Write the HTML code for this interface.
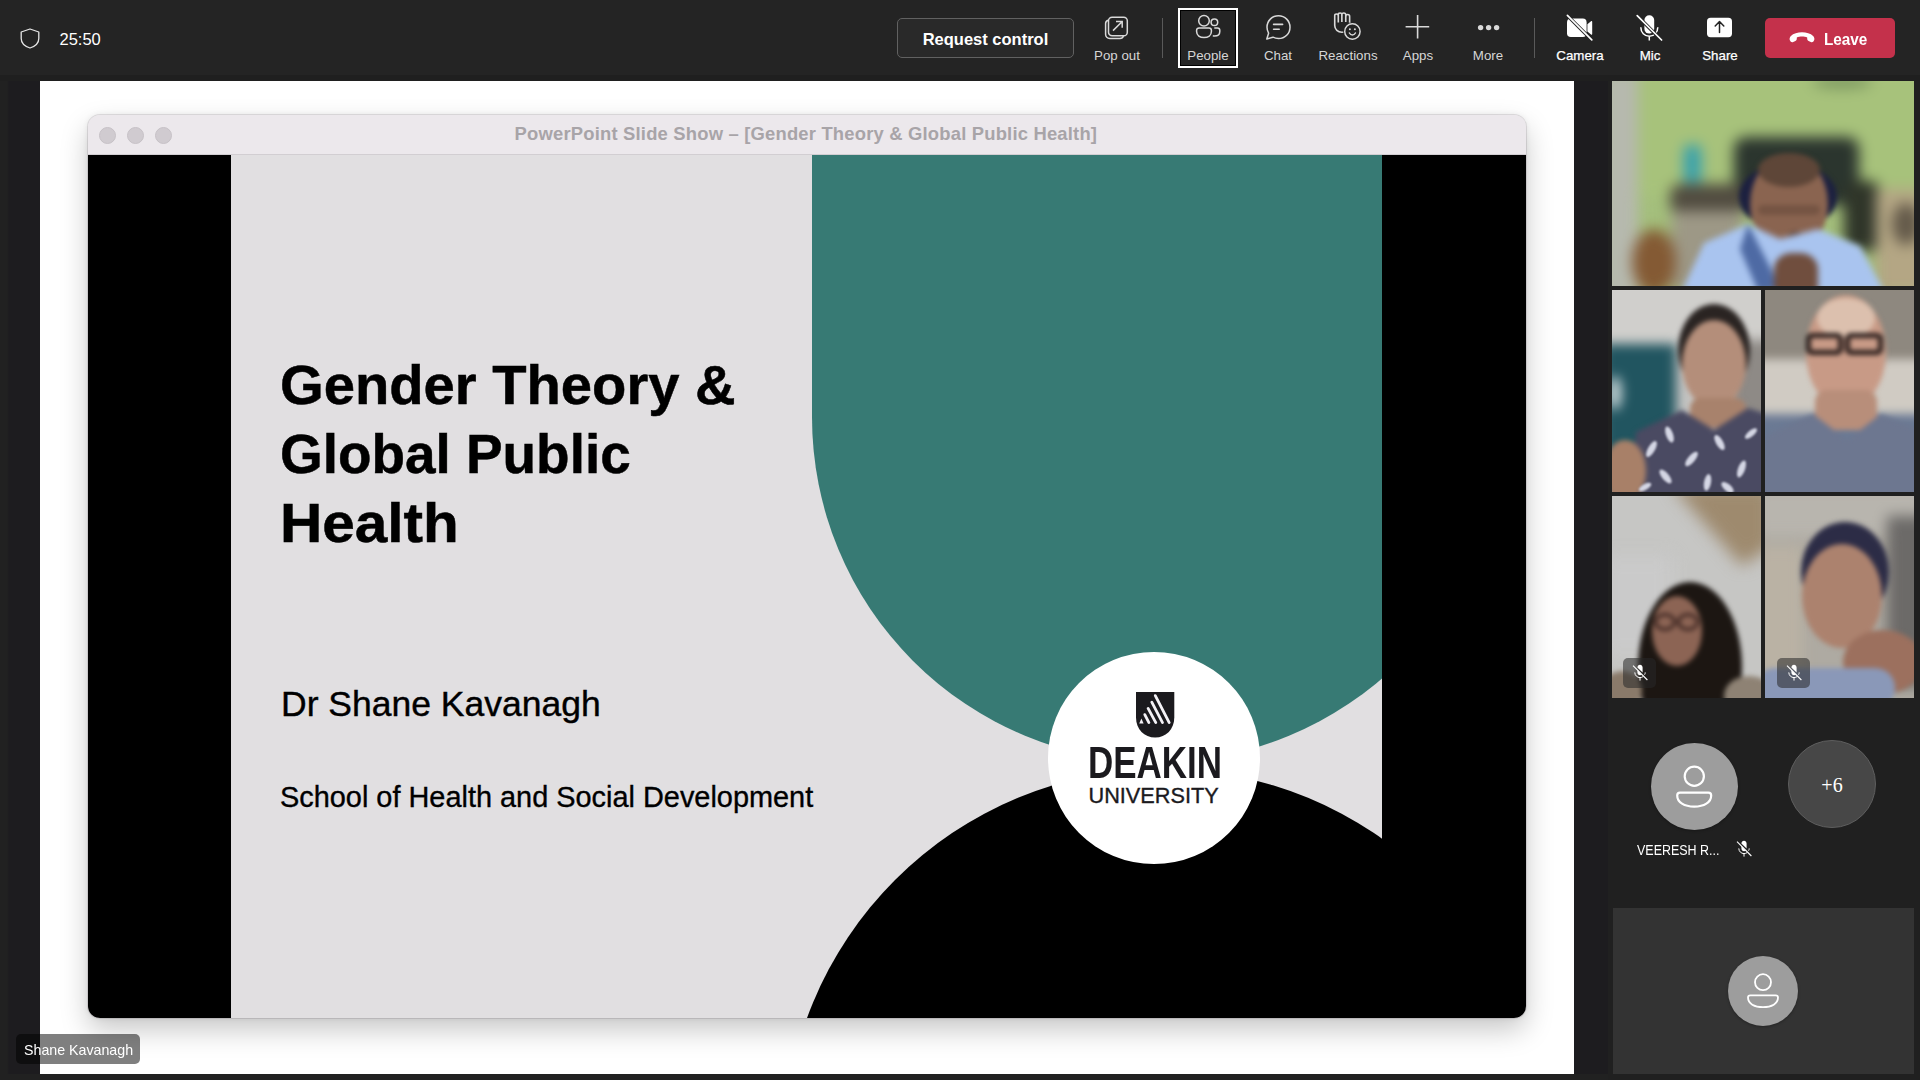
<!DOCTYPE html>
<html><head><meta charset="utf-8">
<style>
*{margin:0;padding:0;box-sizing:border-box}
html,body{width:1920px;height:1080px;overflow:hidden;background:#1f1f1f;font-family:"Liberation Sans",sans-serif}
.abs{position:absolute}
#topbar{position:absolute;left:0;top:0;width:1920px;height:75px;background:#242424}
#strip{position:absolute;left:0;top:75px;width:1920px;height:6px;background:#1f1f1f}
#stage{position:absolute;left:0;top:81px;width:1608px;height:993px;background:linear-gradient(90deg,#212121 0,#212121 7px,#1d1c1f 9px,#1d1c1f 100%)}
#panel{position:absolute;left:1608px;top:81px;width:312px;height:999px;background:#202020}
#bottom{position:absolute;left:0;top:1074px;width:1608px;height:6px;background:#212121}
#screen{position:absolute;left:40px;top:81px;width:1534px;height:993px;background:#fff;overflow:hidden}
.lbl{position:absolute;top:49px;line-height:13.3px;font-size:13.3px;color:#d6d6d6;white-space:nowrap;text-align:center}
.lblw{color:#fff}
.sep{position:absolute;top:18px;width:1px;height:40px;background:#5a5a5a}
svg{position:absolute;overflow:visible}
</style></head><body>
<div id="topbar"></div>
<div id="strip"></div>
<div id="stage"></div>
<div id="panel"></div>
<div id="bottom"></div>

<!-- top bar content -->
<svg style="left:20px;top:28px" width="20" height="21" viewBox="0 0 20 21"><path d="M10 1 L1.2 4 V10.5 C1.2 15 4.5 18.2 10 20 C15.5 18.2 18.8 15 18.8 10.5 V4 Z" fill="none" stroke="#e6e6e6" stroke-width="1.3" stroke-linejoin="round"/></svg>
<div class="abs" style="left:59.5px;top:31px;font-size:16.5px;line-height:16.5px;color:#fff">25:50</div>

<div class="abs" style="left:897px;top:18px;width:177px;height:40px;border:1px solid #616161;border-radius:5px;background:#292929"></div>
<div class="abs" style="left:897px;top:31px;width:177px;text-align:center;font-size:16.5px;line-height:16.5px;font-weight:bold;color:#fff">Request control</div>

<!-- icons row -->

<!-- Pop out -->
<svg style="left:1104px;top:15px" width="25" height="25" viewBox="0 0 25 25" fill="none" stroke="#d9d9d9" stroke-width="1.5">
  <path d="M4.2 5.2 C2.6 5.6 1.6 7 1.6 8.6 V19.2 C1.6 21.6 3.4 23.4 5.8 23.4 H16 C17.7 23.4 19 22.5 19.5 21"/>
  <rect x="4.5" y="2.2" width="18.8" height="18.6" rx="3.6"/>
  <path d="M9 15.6 L18 6.8 M12 6.6 H18.2 V12.8"/>
</svg>
<!-- People -->
<svg style="left:1195px;top:14px" width="27" height="26" viewBox="0 0 27 26" fill="none" stroke="#d9d9d9" stroke-width="1.5">
  <circle cx="9" cy="6.8" r="5.3"/>
  <circle cx="19.4" cy="8.3" r="3.3"/>
  <path d="M1.6 16.3 C1.6 14.8 2.6 14 4 14 H14 C15.4 14 16.4 14.8 16.4 16.3 V17.6 C16.4 21.6 13 23.6 9 23.6 C5 23.6 1.6 21.6 1.6 17.6 Z"/>
  <path d="M19.3 14 H22.4 C23.8 14 24.8 14.8 24.8 16.3 V17.4 C24.8 20.2 22.6 22 19.4 22 C18.8 22 18.3 21.9 17.8 21.8"/>
</svg>
<!-- Chat -->
<svg style="left:1265px;top:14px" width="27" height="27" viewBox="0 0 27 27" fill="none" stroke="#d9d9d9" stroke-width="1.5">
  <path d="M13.5 1.8 C20 1.8 25 6.8 25 13.2 C25 19.6 20 24.6 13.5 24.6 C11.5 24.6 9.6 24.1 8 23.2 L1.8 25 L3.6 19.2 C2.6 17.4 2 15.4 2 13.2 C2 6.8 7 1.8 13.5 1.8 Z" stroke-linejoin="round"/>
  <path d="M8.6 10.4 H17.6 M8.6 15.2 H14.2" stroke-linecap="round" stroke-width="1.6"/>
</svg>
<!-- Reactions -->
<svg style="left:1333px;top:12px" width="30" height="30" viewBox="0 0 30 30" fill="none" stroke="#d9d9d9" stroke-width="1.5" stroke-linejoin="round">
  <g transform="scale(1.08,1)">
  <path d="M15.4 10.8 V4.6 C15.4 3.4 14.6 2.6 13.6 2.6 C12.6 2.6 11.8 3.4 11.8 4.6 V2.8 C11.8 1.7 11 1 10 1 C9 1 8.2 1.7 8.2 2.8 V2.6 C8.2 1.6 7.4 1 6.6 1 C5.7 1 4.9 1.6 4.9 2.6 V3.6 C4.9 2.7 4.2 2 3.3 2 C2.4 2 1.6 2.7 1.6 3.6 V13.6 C1.6 17.6 4.6 20.2 8.2 20.2 C9.6 20.2 10.4 20 11.2 19.6"/>
  <path d="M8.2 3 V10 M11.8 4.4 V10 M4.9 3.6 V10.4 M15.4 10.8 L17.2 12.6"/>
  </g>
  <circle cx="19.4" cy="19.5" r="7.7" stroke="#242424" stroke-width="3"/>
  <circle cx="19.4" cy="19.5" r="7.7"/>
  <circle cx="16.9" cy="17.2" r="1" fill="#d9d9d9" stroke="none"/>
  <circle cx="21.9" cy="17.2" r="1" fill="#d9d9d9" stroke="none"/>
  <path d="M16.4 21 C17.2 22.4 18.2 23 19.4 23 C20.6 23 21.6 22.4 22.4 21" stroke-linecap="round"/>
</svg>
<!-- Apps -->
<svg style="left:1404px;top:14px" width="26" height="26" viewBox="0 0 26 26" fill="none" stroke="#d9d9d9" stroke-width="1.6">
  <path d="M13.6 1 V24.6 M1.6 12.8 H25.2"/>
</svg>
<!-- More -->
<svg style="left:1476px;top:24px" width="26" height="8" viewBox="0 0 26 8" fill="#d9d9d9">
  <circle cx="4.6" cy="3.6" r="2.7"/><circle cx="12.6" cy="3.6" r="2.7"/><circle cx="20.6" cy="3.6" r="2.7"/>
</svg>
<!-- Camera off -->
<svg style="left:1565px;top:14px" width="29" height="28" viewBox="0 0 29 28">
  <rect x="2" y="4.6" width="19.6" height="18.4" rx="3.8" fill="#fff"/>
  <path d="M22.4 10.2 L26 7.2 C26.6 6.7 27.2 7 27.2 7.8 V20 C27.2 20.8 26.6 21.1 26 20.6 L22.4 17.6 Z" fill="#fff"/>
  <path d="M2.4 1.6 L26.8 26" stroke="#242424" stroke-width="3.4"/>
  <path d="M2.4 1.4 L26.8 25.8" stroke="#fff" stroke-width="1.7" stroke-linecap="round"/>
</svg>
<!-- Mic off -->
<svg style="left:1635px;top:14px" width="29" height="28" viewBox="0 0 29 28">
  <rect x="9.4" y="1.2" width="9.8" height="18.4" rx="4.9" fill="#fff"/>
  <path d="M5.8 13.2 C5.8 18.6 9.6 22.2 14.3 22.2 C19 22.2 22.8 18.6 22.8 13.2 M14.3 22.2 V26.6" fill="none" stroke="#fff" stroke-width="1.5"/>
  <path d="M2.2 1.8 L26.6 26.2" stroke="#242424" stroke-width="3.4"/>
  <path d="M2.2 1.6 L26.6 26" stroke="#fff" stroke-width="1.7" stroke-linecap="round"/>
</svg>
<!-- Share -->
<svg style="left:1706px;top:17px" width="27" height="21" viewBox="0 0 27 21">
  <rect x="1" y="0.8" width="25" height="19.4" rx="3.6" fill="#fff"/>
  <path d="M13.5 15.6 V4.8 M9.2 9 L13.5 4.6 L17.8 9" fill="none" stroke="#242424" stroke-width="1.5" stroke-linecap="round" stroke-linejoin="round"/>
</svg>



<div class="lbl" style="left:1086px;width:62px">Pop out</div>
<div class="sep" style="left:1162px"></div>
<div class="abs" style="left:1178px;top:8px;width:60px;height:60px;border:2px solid #fff;"></div>
<div class="abs" style="left:1180px;top:10px;width:56px;height:56px;border:1px solid #000;"></div>
<div class="lbl" style="left:1178px;width:60px">People</div>
<div class="lbl" style="left:1248px;width:60px">Chat</div>
<div class="lbl" style="left:1313px;width:70px">Reactions</div>
<div class="lbl" style="left:1388px;width:60px">Apps</div>
<div class="lbl" style="left:1458px;width:60px">More</div>
<div class="sep" style="left:1534px"></div>
<div class="lbl lblw" style="left:1545px;width:70px;-webkit-text-stroke:0.25px #fff">Camera</div>
<div class="lbl lblw" style="left:1620px;width:60px;-webkit-text-stroke:0.25px #fff">Mic</div>
<div class="lbl lblw" style="left:1690px;width:60px;-webkit-text-stroke:0.25px #fff">Share</div>

<div class="abs" style="left:1765px;top:18px;width:130px;height:40px;border-radius:5px;background:#c4314b"></div>
<div class="abs" style="left:1824px;top:30.5px;font-size:17px;line-height:17px;font-weight:bold;color:#fff;transform:scaleX(0.9);transform-origin:0 0">Leave</div>
<!-- Leave phone -->
<svg style="left:1788px;top:30px" width="28" height="14" viewBox="0 0 28 14">
  <path d="M2 10.6 C1.4 9.6 1.4 7.6 2.6 6.2 C5.6 3.2 9.6 2.2 14 2.2 C18.4 2.2 22.4 3.2 25.4 6.2 C26.6 7.6 26.6 9.6 26 10.6 L25.4 11.4 C24.8 12.2 23.8 12.4 22.8 12 L20.6 11 C19.6 10.6 19.2 9.8 19.2 8.6 V7.6 C17.8 6.8 15.8 6.6 14 6.6 C12.2 6.6 10.2 6.8 8.8 7.6 V8.6 C8.8 9.8 8.4 10.6 7.4 11 L5.2 12 C4.2 12.4 3.2 12.2 2.6 11.4 Z" fill="#fff"/>
</svg>

<!-- shared screen -->
<div id="screen">
  <div id="win" class="abs" style="left:48px;top:34px;width:1438px;height:903px;border-radius:12px;background:#ece8ec;box-shadow:0 12px 28px rgba(0,0,0,0.22),0 0 0 1px rgba(120,110,120,0.18),0 0 6px rgba(0,0,0,0.08);overflow:hidden">
    <div class="abs" style="left:0;top:40px;width:1438px;height:863px;background:#000"></div>
    <div class="abs" style="left:0;top:0;width:1438px;height:40px;background:#ece8ec;border-bottom:1px solid #d2ced2"></div>
    <div class="abs" style="left:11px;top:12px;width:17px;height:17px;border-radius:50%;background:#d0cbd0;border:1px solid #c6c1c6"></div>
    <div class="abs" style="left:39px;top:12px;width:17px;height:17px;border-radius:50%;background:#d0cbd0;border:1px solid #c6c1c6"></div>
    <div class="abs" style="left:67px;top:12px;width:17px;height:17px;border-radius:50%;background:#d0cbd0;border:1px solid #c6c1c6"></div>
    <div class="abs" style="left:426.6px;top:9.8px;font-size:18.4px;line-height:18.4px;font-weight:bold;color:#a8a4a8;white-space:nowrap;letter-spacing:0.2px">PowerPoint Slide Show – [Gender Theory &amp; Global Public Health]</div>
    <div id="slide" class="abs" style="left:143px;top:40px;width:1151px;height:863px;background:#e1dfe1;overflow:hidden">
      <svg style="left:0;top:0" width="1151" height="863" viewBox="0 0 1151 863">
        <path d="M581 0 H1271 V262 A345 345 0 0 1 581 262 Z" fill="#377a74"/>
        <circle cx="932" cy="993" r="379" fill="#000"/>
        <circle cx="923" cy="603" r="106" fill="#fff"/>
      </svg>
    </div>
  </div>
</div>
<!-- slide texts (absolute to page) -->
<div class="abs" style="left:280px;top:349.6px;font-size:56px;line-height:69.4px;font-weight:bold;color:#000;white-space:nowrap;-webkit-text-stroke:0.5px #000;transform:scaleX(1.003);transform-origin:0 0">Gender Theory &amp;</div>
<div class="abs" style="left:280px;top:419px;font-size:56px;line-height:69.4px;font-weight:bold;color:#000;white-space:nowrap;-webkit-text-stroke:0.5px #000;transform:scaleX(0.98);transform-origin:0 0">Global Public</div>
<div class="abs" style="left:280px;top:488.4px;font-size:56px;line-height:69.4px;font-weight:bold;color:#000;white-space:nowrap;-webkit-text-stroke:0.5px #000;transform:scaleX(1.045);transform-origin:0 0">Health</div>
<div class="abs" style="left:281px;top:686.5px;font-size:35.5px;line-height:35.5px;color:#000;white-space:nowrap;-webkit-text-stroke:0.4px #000">Dr Shane Kavanagh</div>
<div class="abs" style="left:280px;top:783.4px;font-size:28.9px;line-height:28.9px;color:#000;white-space:nowrap;-webkit-text-stroke:0.35px #000">School of Health and Social Development</div>




<!-- Deakin logo -->
<svg style="left:1135.6px;top:692.2px" width="38.3" height="45.6" viewBox="0 0 38.3 45.6">
  <path d="M0 0 H38.3 V25.5 C38.3 37.2 30 45.6 19.15 45.6 C8.3 45.6 0 37.2 0 25.5 Z" fill="#1b1a1e"/>
  <g stroke="#f4f2f6" stroke-width="2.8" stroke-linecap="round">
    <path d="M19.3 3.6 L33.2 30.6"/>
    <path d="M15.8 10.2 L26.5 30.6"/>
    <path d="M12.1 16.4 L19.8 30.6"/>
    <path d="M8.8 22.6 L12.9 30.6"/>
  </g>
  <path d="M5.4 26.6 L7.6 31.4 H3.2 Z" fill="#f4f2f6"/>
</svg>
<div class="abs" style="left:1088px;top:740.5px;font-size:44px;line-height:44px;font-weight:bold;color:#1b1a1e;white-space:nowrap;transform:scaleX(0.795);transform-origin:0 0">DEAKIN</div>
<div class="abs" style="left:1088.5px;top:784.5px;font-size:21.7px;line-height:21.7px;color:#1b1a1e;white-space:nowrap;-webkit-text-stroke:0.35px #1b1a1e">UNIVERSITY</div>

<!-- participants panel -->
<style>
.tile{position:absolute;overflow:hidden}
.blur{position:absolute;left:0;top:0;width:100%;height:100%}
.e{position:absolute;border-radius:50%}
.r{position:absolute}
.mute{position:absolute;width:33px;height:30px;border-radius:5px;background:rgba(40,40,40,0.55)}
</style>
<div class="tile" style="left:1612px;top:81px;width:302px;height:205px;background:#a4bf7c">
  <div class="blur" style="filter:blur(7px)">
    <div class="r" style="left:-10px;top:-10px;width:36px;height:230px;background:#b6b9ae"></div>
    <div class="r" style="left:26px;top:-10px;width:290px;height:125px;background:#a7c27b"></div>
    <div class="r" style="left:200px;top:-6px;width:60px;height:14px;background:#7f9a62;border-radius:50%"></div>
    <div class="r" style="left:122px;top:56px;width:125px;height:68px;background:#2b352e;border-radius:12px"></div>
    <div class="r" style="left:232px;top:100px;width:36px;height:70px;background:#2f3529;border-radius:10px"></div>
    <div class="r" style="left:58px;top:103px;width:78px;height:30px;background:#514c40;border-radius:10px"></div>
    <div class="r" style="left:72px;top:64px;width:17px;height:38px;background:#33a0ae;border-radius:5px"></div>
    <div class="r" style="left:60px;top:130px;width:70px;height:80px;background:#9d9886"></div>
    <div class="e" style="left:20px;top:148px;width:44px;height:66px;background:#845a34"></div>
    <div class="r" style="left:264px;top:108px;width:50px;height:105px;background:#b4a684"></div>
    <div class="e" style="left:280px;top:122px;width:28px;height:42px;background:#645a4a"></div>
  </div>
  <div class="blur" style="filter:blur(2.5px)">
    <div class="e" style="left:127px;top:82px;width:98px;height:68px;background:#1c2040"></div>
    <div class="e" style="left:138px;top:74px;width:78px;height:98px;background:#8a6450"></div>
    <div class="e" style="left:146px;top:72px;width:62px;height:34px;background:#5e4638"></div>
    <div class="r" style="left:146px;top:124px;width:62px;height:10px;background:#5a4034;border-radius:5px;opacity:0.45"></div>
    <div class="r" style="left:176px;top:150px;width:14px;height:12px;background:#6a4a3a;border-radius:50%"></div>
  </div>
  <div class="blur" style="filter:blur(3px)">
    <svg style="left:0;top:0" width="302" height="205"><path d="M70 210 L92 162 L136 143 L168 158 L206 148 L248 165 L272 210 Z" fill="#a9c4ef"/>
    <path d="M136 143 L160 190 L166 210 L146 210 L128 168 Z" fill="#4e6aa4"/></svg>
    <div class="r" style="left:162px;top:172px;width:44px;height:40px;background:#704e3e;border-radius:40% 40% 10% 10%"></div>
  </div>
</div>

<div class="tile" style="left:1612px;top:290px;width:149px;height:202px;background:#c6c5c3">
  <div class="blur" style="filter:blur(6px)">
    <div class="r" style="left:-10px;top:-10px;width:170px;height:64px;background:#d0cfcc"></div>
    <div class="r" style="left:-10px;top:54px;width:74px;height:150px;background:#215560"></div>
    <div class="e" style="left:-4px;top:86px;width:14px;height:34px;background:#c4d2d4"></div>
    <div class="r" style="left:118px;top:50px;width:45px;height:80px;background:#8e8a86"></div>
  </div>
  <div class="blur" style="filter:blur(2.5px)">
    <div class="e" style="left:66px;top:14px;width:72px;height:92px;background:#2a2422"></div>
    <div class="e" style="left:70px;top:30px;width:64px;height:88px;background:#b48e7a"></div>
    <div class="r" style="left:78px;top:108px;width:56px;height:30px;background:#a8826c;border-radius:10px"></div>
    <svg style="left:0;top:0" width="149" height="202"><path d="M18 210 L24 142 L70 120 L102 140 L136 118 L155 124 L155 210 Z" fill="#4a4a62"/></svg>
    <div class="e" style="left:-8px;top:150px;width:42px;height:62px;background:#a88068"></div>
  </div>
  <div class="blur" style="filter:blur(1.2px)">
    <div class="e" style="left:36px;top:150px;width:7px;height:18px;background:#d4d6e4;transform:rotate(30deg)"></div>
    <div class="e" style="left:54px;top:136px;width:7px;height:17px;background:#d4d6e4;transform:rotate(-20deg)"></div>
    <div class="e" style="left:76px;top:160px;width:7px;height:18px;background:#d4d6e4;transform:rotate(40deg)"></div>
    <div class="e" style="left:104px;top:144px;width:7px;height:17px;background:#d4d6e4;transform:rotate(-30deg)"></div>
    <div class="e" style="left:126px;top:170px;width:7px;height:18px;background:#d4d6e4;transform:rotate(20deg)"></div>
    <div class="e" style="left:50px;top:178px;width:7px;height:17px;background:#d4d6e4;transform:rotate(-40deg)"></div>
    <div class="e" style="left:92px;top:184px;width:7px;height:17px;background:#d4d6e4;transform:rotate(10deg)"></div>
    <div class="e" style="left:136px;top:136px;width:6px;height:15px;background:#d4d6e4;transform:rotate(50deg)"></div>
    <div class="e" style="left:112px;top:190px;width:7px;height:15px;background:#d4d6e4;transform:rotate(-50deg)"></div>
    <div class="e" style="left:30px;top:190px;width:6px;height:14px;background:#d4d6e4;transform:rotate(60deg)"></div>
  </div>
</div>

<div class="tile" style="left:1765px;top:290px;width:149px;height:202px;background:#8d877e">
  <div class="blur" style="filter:blur(5px)">
    <div class="r" style="left:-10px;top:-10px;width:170px;height:80px;background:#8e887f"></div>
    <div class="r" style="left:-10px;top:69px;width:170px;height:58px;background:#d0cbc3"></div>
    <div class="r" style="left:-10px;top:124px;width:170px;height:90px;background:#6b7a94"></div>
  </div>
  <div class="blur" style="filter:blur(2.5px)">
    <div class="e" style="left:41px;top:5px;width:80px;height:114px;background:#c89a86"></div>
    <div class="e" style="left:52px;top:8px;width:58px;height:40px;background:#dcc0ae"></div>
    <div class="r" style="left:50px;top:100px;width:62px;height:40px;background:#b88e7a;border-radius:12px"></div>
    <svg style="left:0;top:0" width="149" height="202"><path d="M-5 210 L0 146 L48 124 L82 150 L116 124 L155 140 L155 210 Z" fill="#6d7790"/></svg>
    <div class="r" style="left:41px;top:43px;width:37px;height:22px;border:5px solid #2c201e;border-radius:6px"></div>
    <div class="r" style="left:80px;top:43px;width:38px;height:22px;border:5px solid #2c201e;border-radius:6px"></div>
  </div>
</div>

<div class="tile" style="left:1612px;top:496px;width:149px;height:202px;background:#c6c6c4">
  <div class="blur" style="filter:blur(8px)">
    <svg style="left:0;top:0" width="149" height="202"><path d="M60 -10 L160 -10 L160 50 L130 70 Z" fill="#9e8a6e"/></svg>
    <div class="r" style="left:-10px;top:60px;width:70px;height:100px;background:#cacaca"></div>
  </div>
  <div class="blur" style="filter:blur(2.5px)">
    <div class="e" style="left:26px;top:86px;width:104px;height:170px;background:#1c1612"></div>
    <div class="e" style="left:40px;top:100px;width:50px;height:70px;background:#8c6454"></div>
    <div class="r" style="left:42px;top:117px;width:22px;height:18px;border:3px solid #3a2420;border-radius:50%"></div>
    <div class="r" style="left:65px;top:117px;width:22px;height:18px;border:3px solid #3a2420;border-radius:50%"></div>
    <div class="r" style="left:-10px;top:175px;width:40px;height:40px;background:#8a7a6a;border-radius:50%"></div>
    <div class="r" style="left:112px;top:180px;width:50px;height:40px;background:#8e8274;border-radius:50%"></div>
  </div>
</div>

<div class="tile" style="left:1765px;top:496px;width:149px;height:202px;background:#aeaaa2">
  <div class="blur" style="filter:blur(7px)">
    <div class="r" style="left:-10px;top:-10px;width:170px;height:50px;background:#b8b5ae"></div>
    <div class="r" style="left:122px;top:20px;width:45px;height:170px;background:#6c6a68"></div>
    <div class="r" style="left:-10px;top:50px;width:48px;height:140px;background:#bab2a4"></div>
  </div>
  <div class="blur" style="filter:blur(2.5px)">
    <div class="e" style="left:36px;top:26px;width:88px;height:100px;background:#2c2c46"></div>
    <div class="e" style="left:37px;top:48px;width:80px;height:104px;background:#ac826e"></div>
    <div class="e" style="left:78px;top:134px;width:80px;height:64px;background:#9c705e"></div>
    <div class="r" style="left:-10px;top:172px;width:140px;height:40px;background:#8a98b8;border-radius:20px"></div>
  </div>
</div>

<div class="mute" style="left:1623px;top:658px"></div>
<div class="mute" style="left:1777px;top:658px"></div>


<!-- mute glyphs -->
<svg style="left:1630px;top:664px" width="20" height="18" viewBox="0 0 20 18">
  <path d="M7.4 3.6 C7.4 2 8.6 0.8 10 0.8 C11.4 0.8 12.6 2 12.6 3.6 V8.6 L7.4 3.4 Z M7.4 5.8 L12 10.4 C11.6 10.9 10.8 11.2 10 11.2 C8.6 11.2 7.4 10 7.4 8.4 Z" fill="#fff"/>
  <path d="M4.8 8.4 C4.8 11.4 7.2 13.6 10 13.6 C11.2 13.6 12.2 13.2 13.1 12.6 M15.2 8.4 C15.2 9.2 15 10 14.6 10.7 M10 13.6 V16.6" fill="none" stroke="#fff" stroke-width="1"/>
  <path d="M3 1.6 L17.4 16" stroke="#fff" stroke-width="1.1"/>
</svg>
<svg style="left:1784px;top:664px" width="20" height="18" viewBox="0 0 20 18">
  <path d="M7.4 3.6 C7.4 2 8.6 0.8 10 0.8 C11.4 0.8 12.6 2 12.6 3.6 V8.6 L7.4 3.4 Z M7.4 5.8 L12 10.4 C11.6 10.9 10.8 11.2 10 11.2 C8.6 11.2 7.4 10 7.4 8.4 Z" fill="#fff"/>
  <path d="M4.8 8.4 C4.8 11.4 7.2 13.6 10 13.6 C11.2 13.6 12.2 13.2 13.1 12.6 M15.2 8.4 C15.2 9.2 15 10 14.6 10.7 M10 13.6 V16.6" fill="none" stroke="#fff" stroke-width="1"/>
  <path d="M3 1.6 L17.4 16" stroke="#fff" stroke-width="1.1"/>
</svg>

<!-- avatars -->
<div class="abs" style="left:1651px;top:743px;width:87px;height:87px;border-radius:50%;background:#9d9d9d;box-shadow:0 1px 3px rgba(0,0,0,0.3)"></div>
<svg style="left:1674px;top:764px" width="40" height="46" viewBox="0 0 40 46" fill="none" stroke="#fff" stroke-width="2.2">
  <circle cx="20.3" cy="12.3" r="9.6"/>
  <path d="M3.2 31.4 C3.2 29.6 4.4 28.6 6 28.6 H34.4 C36 28.6 37.2 29.6 37.2 31.4 C37.2 38.4 30 42.6 20.2 42.6 C10.4 42.6 3.2 38.4 3.2 31.4 Z"/>
</svg>
<div class="abs" style="left:1637px;top:843px;font-size:14.5px;line-height:14.5px;color:#fff;white-space:nowrap;transform:scaleX(0.86);transform-origin:0 0">VEERESH R...</div>
<svg style="left:1734px;top:840px" width="20" height="18" viewBox="0 0 20 18">
  <path d="M7.4 3.6 C7.4 2 8.6 0.8 10 0.8 C11.4 0.8 12.6 2 12.6 3.6 V8.6 L7.4 3.4 Z M7.4 5.8 L12 10.4 C11.6 10.9 10.8 11.2 10 11.2 C8.6 11.2 7.4 10 7.4 8.4 Z" fill="#fff"/>
  <path d="M4.8 8.4 C4.8 11.4 7.2 13.6 10 13.6 C11.2 13.6 12.2 13.2 13.1 12.6 M15.2 8.4 C15.2 9.2 15 10 14.6 10.7 M10 13.6 V16.6" fill="none" stroke="#fff" stroke-width="1"/>
  <path d="M3 1.6 L17.4 16" stroke="#fff" stroke-width="1.1"/>
</svg>
<div class="abs" style="left:1788px;top:740px;width:88px;height:88px;border-radius:50%;background:#474747;border:1px solid #5e5e5e"></div>
<div class="abs" style="left:1788px;top:775px;width:88px;text-align:center;font-family:'Liberation Serif',serif;font-size:20px;line-height:20px;color:#fff">+6</div>

<!-- bottom tile -->
<div class="abs" style="left:1613px;top:908px;width:301px;height:166px;background:#333333"></div>
<div class="abs" style="left:1728px;top:956px;width:70px;height:70px;border-radius:50%;background:#9d9d9d;box-shadow:0 1px 3px rgba(0,0,0,0.3)"></div>
<svg style="left:1746px;top:972px" width="34" height="38" viewBox="0 0 34 38" fill="none" stroke="#fff" stroke-width="1.8">
  <circle cx="17" cy="10.2" r="8"/>
  <path d="M2 25.6 C2 24.2 3 23.4 4.4 23.4 H29.6 C31 23.4 32 24.2 32 25.6 C32 31.6 25.6 35.2 17 35.2 C8.4 35.2 2 31.6 2 25.6 Z"/>
</svg>

<!-- name label -->
<div class="abs" style="left:16px;top:1034px;width:124px;height:30px;border-radius:5px;background:rgba(0,0,0,0.5)"></div>
<div class="abs" style="left:23.5px;top:1043px;font-size:14.5px;line-height:14.5px;color:#fff;white-space:nowrap;transform:scaleX(0.98);transform-origin:0 0">Shane Kavanagh</div>

</body></html>
